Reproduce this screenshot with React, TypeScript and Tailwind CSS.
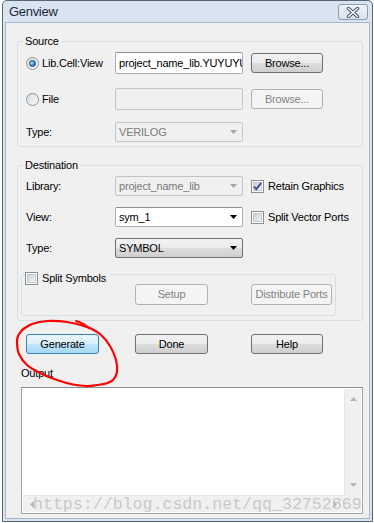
import type { ReactNode } from 'react';

type BtnKind = 'normal' | 'primary' | 'disabled';

function Btn({ label, kind = 'normal', className }: { label: string; kind?: BtnKind; className: string }) {
  const skin =
    kind === 'primary'
      ? 'border-[#3c7fb1] bg-[linear-gradient(#eaf6fd_0%,#d9f0fc_50%,#bee6fd_51%,#a7d9f5_100%)] text-black'
      : kind === 'disabled'
        ? 'border-[#adb2b5] bg-[#f4f4f4] text-[#838383]'
        : 'border-[#707070] bg-[linear-gradient(#f2f2f2_0%,#ebebeb_50%,#dddddd_51%,#cfcfcf_100%)] text-black';
  return (
    <div className={`flex shrink-0 items-center justify-center rounded-[3px] border ${skin} ${className}`}>
      {label}
    </div>
  );
}

function Arrow({ disabled }: { disabled?: boolean }) {
  return (
    <svg width="8" height="5" viewBox="0 0 8 5" className="ml-auto mr-[4px] shrink-0">
      <path d="M0 0 H7 L3.5 4 Z" fill={disabled ? '#a5a5a5' : '#000'} />
    </svg>
  );
}

function TextBox({ value, disabled }: { value?: string; disabled?: boolean }) {
  return (
    <div
      className={`flex h-[22px] w-[128px] shrink-0 items-center overflow-hidden whitespace-nowrap rounded-[2px] border pl-[3px] ${
        disabled ? 'border-[#c2c5c9] bg-[#f0f0f0]' : 'border-[#abadb3] border-t-[#8b8e94] bg-white'
      }`}
    >
      {value}
    </div>
  );
}

function Combo({ value, kind }: { value: string; kind: 'disabled' | 'edit' | 'button' }) {
  const skin =
    kind === 'disabled'
      ? 'border-[#c2c5c9] bg-[#f0f0f0] text-[#7a7a7a]'
      : kind === 'edit'
        ? 'border-[#abadb3] border-t-[#8b8e94] bg-white text-black'
        : 'border-[#707070] bg-[linear-gradient(#f2f2f2_0%,#ebebeb_50%,#dddddd_51%,#cfcfcf_100%)] text-black';
  return (
    <div className={`flex h-[20px] w-[128px] shrink-0 items-center rounded-[2px] border pl-[3px] ${skin}`}>
      <span className="truncate">{value}</span>
      <Arrow disabled={kind === 'disabled'} />
    </div>
  );
}

function Radio({ checked }: { checked?: boolean }) {
  return (
    <div className="flex h-[13px] w-[13px] shrink-0 items-center justify-center rounded-full border border-[#8a96a3] bg-[linear-gradient(135deg,#d6dade,#fbfbfb)]">
      {checked ? (
        <div className="h-[7px] w-[7px] rounded-full border border-[#1a4a7a] bg-[radial-gradient(circle_at_35%_35%,#b8e6ff,#2d86d0_60%,#124f8c)]" />
      ) : null}
    </div>
  );
}

function Check({ checked }: { checked?: boolean }) {
  return (
    <div className="relative flex h-[13px] w-[13px] shrink-0 items-center justify-center border border-[#8e8f8f] bg-white">
      <div className="h-[9px] w-[9px] border border-[#c6c9ce] bg-[linear-gradient(135deg,#cbcfd5,#f4f4f4)]" />
      {checked ? (
        <svg width="11" height="11" viewBox="0 0 11 11" className="absolute left-0 top-0">
          <path d="M2 5.5 L4.3 8.2 L9.2 1.8" fill="none" stroke="#3c4fa0" strokeWidth="1.9" />
        </svg>
      ) : null}
    </div>
  );
}

function Row({ label, children, className }: { label: ReactNode; children: ReactNode; className: string }) {
  return (
    <div className={`flex items-center pl-[8px] ${className}`}>
      <div className="flex w-[89px] shrink-0 items-center">{label}</div>
      {children}
    </div>
  );
}

function CheckLabel({ checked, text }: { checked?: boolean; text: string }) {
  return (
    <div className="ml-[8px] flex items-center">
      <Check checked={checked} />
      <span className="ml-[4px] whitespace-nowrap">{text}</span>
    </div>
  );
}

// freehand red ring around Generate
const ring: [number, number][] = [
  [22, 330], [32, 324], [47, 321], [67, 322], [87, 327], [100, 334], [110, 346], [116, 360],
  [117, 372], [113, 380], [106, 383.5], [97, 385], [87, 386], [73, 384.5], [57, 380], [40, 373],
  [27, 365], [19, 354], [17, 343], [18, 336], [22, 330],
];

function smoothPath(pts: [number, number][]) {
  let d = `M${pts[0][0]},${pts[0][1]}`;
  for (let i = 0; i < pts.length - 1; i++) {
    const p0 = pts[Math.max(0, i - 1)];
    const p1 = pts[i];
    const p2 = pts[i + 1];
    const p3 = pts[Math.min(pts.length - 1, i + 2)];
    const c1 = [p1[0] + (p2[0] - p0[0]) / 6, p1[1] + (p2[1] - p0[1]) / 6];
    const c2 = [p2[0] - (p3[0] - p1[0]) / 6, p2[1] - (p3[1] - p1[1]) / 6];
    d += ` C${c1[0]},${c1[1]} ${c2[0]},${c2[1]} ${p2[0]},${p2[1]}`;
  }
  return d;
}

export default function App() {
  return (
    <div className="relative h-[523px] w-[374px] overflow-hidden bg-white pl-[2px] font-['Liberation_Sans',sans-serif] text-[11px] tracking-[-0.2px] text-black">
      <div className="flex h-[522px] w-[371px] flex-col rounded-t-[5px] border border-[#5b6675] bg-[#d8e4f2]">
        <div className="flex h-[21px] shrink-0 items-center pl-[6px]">
          <span className="text-[13px] tracking-[-0.3px] text-[#1e2a3a]">Genview</span>
          <div className="ml-auto mr-[4px] mt-[1px] flex h-[16px] w-[30px] items-center justify-center rounded-[3px] border border-[#8c9bb0] bg-[linear-gradient(#eef3f9,#d7e2ef)]">
            <svg width="14" height="11" viewBox="0 0 14 11">
              <path d="M2.5 1.5 L11.5 9.5 M11.5 1.5 L2.5 9.5" stroke="#4b5668" strokeWidth="3.6" strokeLinecap="round" />
              <path d="M2.5 1.5 L11.5 9.5 M11.5 1.5 L2.5 9.5" stroke="#f4f6f9" strokeWidth="1.6" strokeLinecap="round" />
            </svg>
          </div>
        </div>

        <div className="mx-[2px] mb-[2px] flex flex-1 flex-col border border-[#a7b6c9] bg-[#f0f0f0]">
          {/* Source */}
          <fieldset className="ml-[11px] mr-[6px] mt-[11px] rounded-[3px] border border-[#d5dfe5] pb-[4px]">
            <legend className="ml-[5px] px-[2px] leading-[14px]">Source</legend>
            <Row
              className="mt-[4px] h-[22px]"
              label={
                <>
                  <Radio checked />
                  <span className="ml-[3px]">Lib.Cell:View</span>
                </>
              }
            >
              <TextBox value="project_name_lib.YUYUYUYU" />
              <Btn label="Browse..." className="ml-[8px] h-[20px] w-[72px]" />
            </Row>
            <Row
              className="mt-[14px] h-[22px]"
              label={
                <>
                  <Radio />
                  <span className="ml-[3px]">File</span>
                </>
              }
            >
              <TextBox disabled />
              <Btn label="Browse..." kind="disabled" className="ml-[8px] h-[20px] w-[72px]" />
            </Row>
            <Row className="mt-[12px] h-[20px]" label="Type:">
              <Combo value="VERILOG" kind="disabled" />
            </Row>
          </fieldset>

          {/* Destination */}
          <fieldset className="ml-[11px] mr-[6px] mt-[11px] rounded-[3px] border border-[#d5dfe5] pb-[4px]">
            <legend className="ml-[5px] px-[2px] leading-[14px]">Destination</legend>
            <Row className="mt-[4px] h-[20px]" label="Library:">
              <Combo value="project_name_lib" kind="disabled" />
              <CheckLabel checked text="Retain Graphics" />
            </Row>
            <Row className="mt-[11px] h-[20px]" label="View:">
              <Combo value="sym_1" kind="edit" />
              <CheckLabel text="Split Vector Ports" />
            </Row>
            <Row className="mt-[11px] h-[20px]" label="Type:">
              <Combo value="SYMBOL" kind="button" />
            </Row>

            <fieldset className="ml-[3px] mt-[13px] w-[315px] rounded-[3px] border border-[#d5dfe5] pb-[10px]">
              <legend className="ml-[3px] h-[6px] pr-[4px]">
                <div className="flex items-center pt-[1px]">
                  <Check />
                  <span className="ml-[4px] leading-[13px]">Split Symbols</span>
                </div>
              </legend>
              <div className="mt-[7px] flex pl-[113px]">
                <Btn label="Setup" kind="disabled" className="h-[21px] w-[73px]" />
                <Btn label="Distribute Ports" kind="disabled" className="ml-[43px] h-[21px] w-[81px]" />
              </div>
            </fieldset>
          </fieldset>

          <div className="mt-[13px] flex pl-[20px]">
            <Btn label="Generate" kind="primary" className="h-[20px] w-[73px]" />
            <Btn label="Done" className="ml-[36px] h-[20px] w-[73px]" />
            <Btn label="Help" className="ml-[43px] h-[20px] w-[72px]" />
          </div>

          <div className="mt-[12px] pl-[15px] leading-[14px]">Output</div>

          <div className="ml-[15px] mt-[7px] flex h-[127px] w-[342px] flex-col border border-[#a5a5a5] border-t-[#8d8d8d] bg-white p-[1px]">
            <div className="flex flex-1">
              <div className="flex-1" />
              <div className="flex w-[17px] flex-col items-center justify-between border-l border-[#e6e6e6] bg-[#f0f0f0] py-[8px]">
                <svg width="7" height="4" viewBox="0 0 7 4">
                  <path d="M0 4 L3.5 0 L7 4 Z" fill="#b4b4b4" />
                </svg>
                <svg width="7" height="4" viewBox="0 0 7 4">
                  <path d="M0 0 L3.5 4 L7 0 Z" fill="#b4b4b4" />
                </svg>
              </div>
            </div>
            <div className="flex h-[17px]">
              <div className="flex flex-1 items-center justify-between border-t border-[#e6e6e6] bg-[#f0f0f0] px-[7px]">
                <svg width="4" height="7" viewBox="0 0 4 7">
                  <path d="M4 0 L0 3.5 L4 7 Z" fill="#b4b4b4" />
                </svg>
                <svg width="4" height="7" viewBox="0 0 4 7">
                  <path d="M0 0 L4 3.5 L0 7 Z" fill="#b4b4b4" />
                </svg>
              </div>
              <div className="w-[17px] bg-[#f0f0f0]" />
            </div>
          </div>
        </div>
      </div>

      {/* watermark */}
      <span className="pointer-events-none absolute left-[33px] top-[496px] whitespace-nowrap font-['Liberation_Mono',monospace] text-[16.6px] leading-[17px] tracking-normal text-[#c4c4c4]/90">
        https://blog.csdn.net/qq_32752869
      </span>

      {/* red hand drawn mark */}
      <svg className="pointer-events-none absolute left-0 top-0" width="374" height="523" viewBox="0 0 374 523">
        <path d={smoothPath(ring)} fill="none" stroke="#ff0000" strokeWidth="2.2" strokeLinecap="round" />
        <path d="M76 321 Q82 322.5 89 328" fill="none" stroke="#ff0000" strokeWidth="2" strokeLinecap="round" />
      </svg>
    </div>
  );
}
